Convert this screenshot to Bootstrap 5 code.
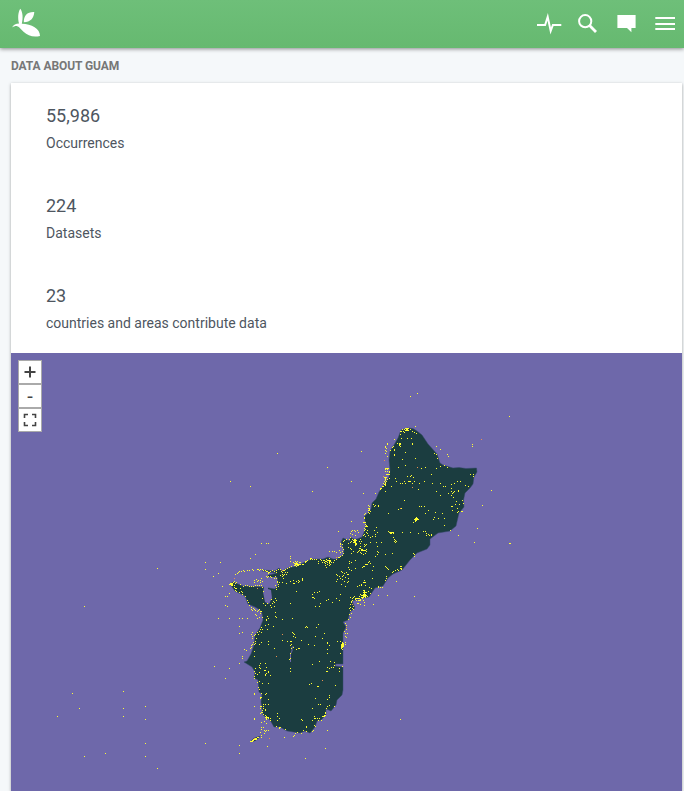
<!DOCTYPE html>
<html lang="en">
<head>
<meta charset="utf-8">
<meta name="viewport" content="width=device-width, initial-scale=1">
<title>Data about Guam</title>
<link href="https://cdn.jsdelivr.net/npm/bootstrap@5.3.0/dist/css/bootstrap.min.css" rel="stylesheet">
<style>
body{font-family:Roboto,"Liberation Sans",sans-serif;background:#f5f8fa;color:#4e565f;height:791px;overflow:hidden}
.topbar{height:48px;background:linear-gradient(#6ebf79,#66b970);box-shadow:0 1px 4px rgba(0,0,0,.45)}
.topbar svg{display:block;fill:#fff}
.tools{gap:15px;padding-right:8px}
.section-title{font-size:12px;line-height:16px;font-weight:700;letter-spacing:-.08px;color:#777;margin:10px 0 9px 11px}
.panel{margin:0 2px 0 11px;height:708px;background:#fff;box-shadow:0 1px 3px rgba(0,0,0,.35)}
.stats{height:270px;padding:20px 35px 0}
.stat{height:90px}
.figure-value{font-size:18px;line-height:26px}
.figure-label{font-size:14px;line-height:20px;margin-top:4px}
.map{height:438px;background:#6e68aa}
.map-controls{left:7px;top:7px}
.map-controls button{width:24px;height:24px;border:1px solid #aaa;border-radius:0;background:#fff;color:#444;font-size:20px;line-height:20px;outline:0}
</style>
<script src="https://cdn.jsdelivr.net/npm/bootstrap@5.3.0/dist/js/bootstrap.bundle.min.js"></script>
</head>
<body>
<header class="topbar position-relative d-flex align-items-center justify-content-between">
  <a href="#" aria-label="Home"><svg width="48" height="48" viewBox="0 0 48 48"><path d="M20.3 8.7C18 12 17.7 18 19 23.6C16 23.6 13.3 24.8 12 27.6C14 26.3 15.7 25.8 17.3 26.2C19.5 26.8 21 29.5 23.5 31.8C28 36 33.5 37.5 40 36C40.3 28.5 31.5 24 21.8 23.7C23.2 18 22.8 12 20.3 8.7ZM34.3 12C27 11.7 23.8 15.5 23.8 22.2C30.5 22 33.8 18.5 34.3 12Z"/></svg></a>
  <nav class="tools d-flex align-items-center" aria-label="Tools">
    <svg width="26" height="24" viewBox="0 0 26 24"><path d="M0 13H8.1L10.7 4.8L13.7 19L15.9 13H24.3" fill="none" stroke="#fff" stroke-width="2"/></svg>
    <svg width="22" height="24" viewBox="0 0 22 24"><circle cx="7.2" cy="9.2" r="6.1" fill="none" stroke="#fff" stroke-width="2"/><path d="M11.6 13.5L18 19.9" stroke="#fff" stroke-width="2.8"/></svg>
    <svg width="24" height="24" viewBox="0 0 24 24"><path d="M2.4 3H20.6V16H16.4V20.3L12 16H2.4Z"/></svg>
    <svg width="22" height="24" viewBox="0 0 22 24"><path d="M1.3 5H21V7H1.3ZM1.3 11H21V13H1.3ZM1.3 16H21V18H1.3Z"/></svg>
  </nav>
</header>
<main>
  <h2 class="section-title text-uppercase">Data about Guam</h2>
  <section class="panel">
    <div class="stats">
      <div class="stat"><div class="figure-value">55,986</div><div class="figure-label">Occurrences</div></div>
      <div class="stat"><div class="figure-value">224</div><div class="figure-label">Datasets</div></div>
      <div class="stat"><div class="figure-value">23</div><div class="figure-label">countries and areas contribute data</div></div>
    </div>
    <div class="map position-relative overflow-hidden">
      <svg class="d-block" width="671" height="438" viewBox="11 353 671 438" role="img" aria-label="Occurrence map of Guam">
        <path fill="#1b3d40" stroke="#34486a" stroke-width=".5" stroke-linejoin="round" d="M408 428L401 430L398 438L394 445L390 451L389 460L390 470L389 477L385 483L379 492L376 499L372 503L371 509L368 513L364 517L366 524L365 530L362 537L357 539L354 539L350 537L350 541L343 538L341 542L344 550L343 555L337 559L333 559L328 557L323 559L312 559L305 562L297 566L288 568L282 571L279 568L275 571L263 570L267 572L277 573L269 575L277 576L278 585L275 589L263 587L243 586L233 582L230 584L235 591L241 594L245 596L248 604L255 607L260 610L262 613L263 620L260 628L255 635L254 645L251 654L247 661L244 662L252 667L255 672L254 678L258 680L259 692L262 694L261 702L263 715L270 720L274 727L280 727L287 731L300 733L305 731L310 733L315 727L317 721L321 720L326 715L326 709L331 711L336 705L337 700L342 695L343 690V667L335 666L336 664L343 664L343 633L346 627L343 622L348 620L350 612L355 608L352 601L363 598L369 597L375 588L383 586L388 578L393 574L402 570L410 560L417 553L427 549L430 545L430 539L438 533L450 531L456 526L459 513L464 507L463.500 500L465 493L470 488L473 484L474 477L477 472L476.500 468L466 468.500L459 467.500L453 468L443 465L440 463L437 454L428 444L422 435L417 431L413 428.500Z"/>
        <path fill="#6e68aa" d="M266 576H276V583L271 585L268 587L268 589L271 590L272 598L269 604L265 602L263 592L264 587Z"/>
        <path fill="#1b3d40" d="M268 575H278V577H268ZM250 742L254 738L260 736L259 738L255 741Z"/>
        <path stroke="#42517b" fill="none" d="M262 571H275"/>
        <path stroke="#6e68aa" fill="none" d="M290.500 662V654L292 651V647H294"/>
        <g id="dots" shape-rendering="crispEdges"></g>
      </svg>
      <div class="map-controls position-absolute d-flex flex-column">
        <button class="p-0 d-flex align-items-center justify-content-center" aria-label="Zoom in"><svg width="14" height="14"><path d="M1.500 7H12.500M7 1.500V12.500" stroke="#444" stroke-width="2"/></svg></button>
        <button class="p-0" aria-label="Zoom out">-</button>
        <button class="p-0 d-flex align-items-center justify-content-center" aria-label="Full screen"><svg width="14" height="14"><path d="M1.500 5V1.500H5M9 1.500H12.500V5M12.500 9V12.500H9M5 12.500H1.500V9" stroke="#444" stroke-width="1.600" fill="none"/></svg></button>
      </div>
    </div>
  </section>
</main>
<script>
// Sightings grouped by map tile: tile origin, then positions at three units per pixel.
const tiles = [
 [350,380,"181,49 202,40 478,109 367,193 367,199 34,214 4,304 40,340 76,340 424,331 196,139 166,145 169,145 172,145 175,145 163,148 169,148 172,148 166,151 169,151 172,151 175,151 181,148 187,154 193,157 199,160 151,154 154,154 157,148 160,154 163,157 151,163 154,175 172,175 184,175 133,178 148,190 151,190 148,193 151,193 148,196 151,199 142,190 187,190 187,193 112,190 112,193 106,199 106,202 109,205 127,202 130,199 133,208 133,211 121,211 106,211 109,214 106,220 112,229 133,223 133,226 166,217 157,238 196,235 259,199 271,208 253,220 259,223 262,235 292,223 295,229 166,256 145,262 214,265 226,262 271,259 283,256 259,265 292,262 106,265 109,265 112,265 115,265 106,268 112,268 106,274 112,274 118,274 118,277 109,283 112,283 115,283 118,283 103,292 106,292 109,292 106,295 112,298 118,295 106,298 106,301 103,304 109,304 106,307 106,310 100,310 103,313 106,313 106,316 97,319 100,319 94,325 91,325 91,328 124,319 139,304 136,295 172,289 184,286 181,289 190,292 163,304 175,304 178,304 181,304 193,304 151,310 157,310 166,310 187,310 208,310 223,304 247,310 244,283 271,310 280,319 286,319 304,313 313,310 322,304 331,304 346,316 355,319 361,283 370,283 370,289 205,328 259,334 271,346 295,340 304,325 304,334 313,334 325,334 310,352"],
 [350,490,"106,4 40,10 76,10 424,1 397,46 382,115 373,157 478,160 325,136 193,319 139,274 70,343 163,31 151,55 154,55 145,58 208,49 214,49 223,49 115,70 226,70 235,61 256,67 253,82 265,85 250,88 277,70 283,85 199,82 196,85 199,85 202,85 193,88 196,88 199,88 202,88 205,88 196,91 199,91 190,97 196,94 301,121 283,106 337,64 334,64 340,40 328,43 316,43 304,49 307,49 307,61 322,55 325,64 322,67 319,34 337,31 325,1 310,7 304,16 271,16 295,10 307,10 259,4 55,46 58,49 55,55 58,55 58,58 55,61 58,61 61,64 55,67 58,70 46,70 43,73 43,82 70,43 76,46 85,46 85,49 73,49 43,85 40,97 43,97 46,97 46,103 49,106 46,109 49,109 52,109 43,115 46,118 43,121 52,121 49,127 52,130 43,133 40,136 55,136 46,139 61,142 79,112 73,121 82,127 76,133 76,139 67,139 61,157 79,157 94,157 157,127 181,127 205,130 220,124 226,124 229,130 229,136 235,133 238,136 244,133 244,136 115,124 118,127 121,127 124,127 127,127 121,130 124,130 130,127 130,130 130,142 133,148 133,154 136,151 136,157 139,154 13,148 16,148 10,151 13,151 16,151 19,151 13,154 16,154 16,157 10,157 19,160 16,160 16,163 7,148 4,154 1,157 28,154 31,148 34,154 31,160 43,163 49,163 46,166 31,169 43,169 28,175 31,175 34,178 37,178 34,181 37,181 40,181 43,181 46,181 49,178 49,184 28,181 25,184 22,187 31,187 34,190 40,193 46,190 1,175 4,178 10,184 4,190 82,169 82,184 85,187 82,193 76,199 106,193 127,190 190,190 193,193 193,199 4,217 16,211 58,214 61,220 55,217 52,223 49,223 46,223 43,229 40,229 37,232 16,235 70,229 67,241 106,229 109,232 112,235 115,238 127,247 130,244 136,241 151,229 154,229 151,235 154,235 145,241 154,238 142,238 109,259 109,265 106,271 67,265 43,271 40,277 43,277 46,277 34,283 34,286 46,286 22,289 28,286 58,292 64,295 85,289 85,292 91,292 97,292 85,316 112,316 61,310 55,304 40,301 43,301 43,304 40,307 43,307 46,307 49,307 43,310 40,313 43,313 46,313 31,313 34,316 37,316 40,316 43,316 46,316 49,316 40,319 43,319 46,319 52,319 37,322 40,322 46,322 28,319 34,322 25,325 28,325 31,328 19,325 22,325 16,328 28,331 31,331 37,325 40,331 43,337 22,340 25,340 31,343 43,346 1,322 7,325 13,319 10,322 7,331 4,337 1,352 7,355 10,349 4,94 4,124 7,121 13,121 1,130 16,124 22,121 7,133 25,127 16,136"],
 [200,530,"184,40 199,40 205,40 166,73 151,85 271,79 271,85 271,94 16,97 61,97 16,118 55,130 40,139 88,190 82,199 76,226 55,265 118,265 127,265 142,265 172,265 127,307 106,133 112,130 115,127 118,124 124,124 130,121 133,124 142,121 148,121 157,118 160,121 172,118 175,118 178,121 181,118 187,118 190,121 196,121 199,124 202,124 205,127 208,127 205,130 211,124 217,121 223,124 229,121 235,118 241,118 229,127 199,139 202,142 205,139 211,139 214,142 223,145 226,139 229,145 232,154 232,157 235,163 238,157 244,124 247,127 250,121 253,121 256,127 262,127 259,133 253,133 247,133 250,136 241,136 247,139 250,145 256,118 262,115 268,112 274,109 280,97 286,94 289,97 292,94 283,100 286,100 289,100 292,100 298,97 301,97 286,103 289,103 292,103 295,103 298,103 301,103 283,106 286,106 292,106 295,106 289,109 307,103 310,103 316,94 319,94 322,91 316,97 331,85 334,85 337,88 331,88 343,88 349,88 355,94 355,100 361,88 364,91 370,91 367,97 373,91 376,94 382,91 385,91 388,91 391,91 379,88 388,85 388,94 391,94 379,94 373,97 382,97 388,97 394,97 400,97 376,100 388,100 376,106 382,103 391,103 388,106 379,112 403,91 409,88 415,82 418,82 421,79 427,76 430,70 421,67 427,64 430,58 427,52 421,49 421,43 427,43 421,40 430,34 433,31 415,4 388,64 397,64 403,64 409,67 418,61 307,145 295,151 280,151 289,154 295,157 298,154 307,151 307,148 271,154 283,160 280,160 259,160 247,157 235,169 229,172 226,166 229,178 91,160 94,160 97,160 88,163 91,163 94,163 97,163 97,166 94,166 100,157 103,154 106,160 109,157 103,166 103,172 106,175 109,175 106,181 109,184 121,163 118,187 124,184 127,187 127,193 136,199 142,211 145,217 148,226 154,232 160,235 157,241 163,238 166,241 172,244 175,241 178,238 181,244 184,244 181,250 154,238 166,253 178,262 187,262 169,256 184,292 187,298 181,298 178,304 184,307 172,307 175,313 157,307 154,313 157,319 166,313 163,316 157,325 169,325 160,337 157,343 154,352 121,175 130,169 136,166 142,166 148,169 154,169 160,169 166,166 172,166 178,166 184,166 187,172 172,175 190,184 163,151 163,157 169,148 172,154 175,151 181,151 181,157 187,154 184,145 187,205 190,220 196,226 202,220 211,226 214,232 217,220 223,217 220,214 229,211 214,208 226,205 226,247 223,229 226,259 229,262 199,268 205,265 202,259 199,271 247,268 277,265 196,286 205,283 202,298 220,289 271,220 289,184 337,193 343,187 352,187 358,184 340,202 343,205 337,202 346,229 358,229 361,220 379,211 385,208 397,217 409,205 421,193 418,211 316,292 319,289 322,292 277,307 280,310 283,313 280,319 286,322 349,292 355,283 373,310 367,325 346,319 325,343 304,331 274,334 280,352 205,343 223,355 343,346 382,337 412,334 409,133 424,124 427,127 433,130 412,136 418,139 427,139 430,136 439,127 442,133 445,133 436,142 445,145 445,154 442,157 433,154 427,148 421,145 412,148 409,154 424,163 436,169 454,121 445,112 448,100 448,94 448,118 463,28 466,34 466,37 466,40 463,37 469,43 466,46 451,22 448,28 439,28 445,40 445,52 475,205 472,205 475,211 469,211 466,205 454,214 451,223 457,235 448,235 460,238 451,241 454,250 448,253 451,262 445,268 436,280 439,286 439,298 433,304 436,310 442,310 436,319 439,322 427,337 430,340 427,343 424,343 427,346 430,346 427,349 427,352 424,355"],
 [200,640,"127,49 127,55 139,31 133,28 151,25 157,13 160,7 166,4 166,10 163,13 154,16 178,13 184,7 163,34 163,49 118,70 205,4 247,1 262,4 271,4 274,13 271,16 274,25 289,28 295,25 298,25 271,40 271,55 268,58 271,85 271,94 427,10 424,13 427,13 430,13 424,16 427,16 430,16 424,19 427,19 430,19 424,22 427,22 424,25 427,28 421,4 436,7 436,13 421,40 382,10 388,16 382,28 382,40 391,64 403,67 403,76 400,82 418,85 427,79 418,94 379,94 382,94 382,82 388,85 394,82 337,73 358,64 181,70 196,70 178,76 178,82 199,82 181,85 166,85 163,94 166,100 163,109 163,115 178,97 172,103 193,91 196,91 205,94 205,97 199,100 196,103 196,106 211,106 178,124 187,130 205,130 172,127 175,142 178,148 163,160 163,163 184,160 196,163 199,160 181,172 184,172 181,175 205,178 163,199 181,199 184,199 181,205 184,217 187,217 190,193 196,193 205,193 190,199 190,205 187,211 196,211 196,208 181,220 190,223 196,226 199,229 196,232 199,232 202,232 205,232 199,235 205,235 211,235 199,238 211,241 163,235 163,238 193,244 184,247 199,250 184,262 190,262 205,271 199,271 193,271 196,274 193,280 184,268 181,277 184,286 232,220 232,229 238,235 232,241 229,259 238,262 241,262 238,265 256,268 286,280 283,286 280,289 292,277 304,280 310,271 319,274 319,259 319,262 304,238 307,241 337,274 340,271 346,259 343,256 337,241 343,229 343,235 346,235 352,235 358,235 355,241 364,241 367,229 370,229 373,229 376,226 373,226 376,220 376,217 379,205 388,196 403,199 361,193 355,193 337,205 346,175 382,199 388,166 388,172 382,178 406,136 352,139 355,139 328,133 334,130 166,295 169,295 172,292 163,298 166,298 160,298 169,298 157,301 160,301 154,304 157,304 151,304 175,292 184,292 382,271 202,319 253,292 316,355 376,325"],
 [10,560,"442,25 586,7 631,7 586,28 625,40 610,49 637,79 646,109 652,139 625,175 658,175 223,139 613,319 658,325 646,355 187,400 340,394 208,445 340,445 142,469 340,469 406,439 406,478 406,550 286,580 223,589 406,589 586,550 442,625 688,556 688,580 688,310 688,220 688,199"],
 [0,0,"831,1360 1083,1353 981,1401 936,1473 690,1443 750,1458 1530,1629 1200,2157"]
];
const orange = "481,439 234,578 257,588 282,570 336,557 346,627 282,634 276,656 322,680 269,738 254,738 352,604 400,508 412,487 417,467 384,460 383,476";
const ns = "http://www.w3.org/2000/svg";
function plot(list, x, y, scale, color) {
  const p = document.createElementNS(ns, "path");
  p.setAttribute("d", list.split(" ").map(s => {
    const [a, b] = s.split(",").map(Number);
    return `M${x + Math.floor(a / scale)} ${y + Math.floor(b / scale)}h1v1h-1z`;
  }).join(""));
  p.setAttribute("fill", color);
  document.getElementById("dots").append(p);
}
tiles.forEach(([x, y, list]) => plot(list, x, y, 3, "#ffff32"));
plot(orange, 0, 0, 1, "#e99050");
</script>
</body>
</html>
